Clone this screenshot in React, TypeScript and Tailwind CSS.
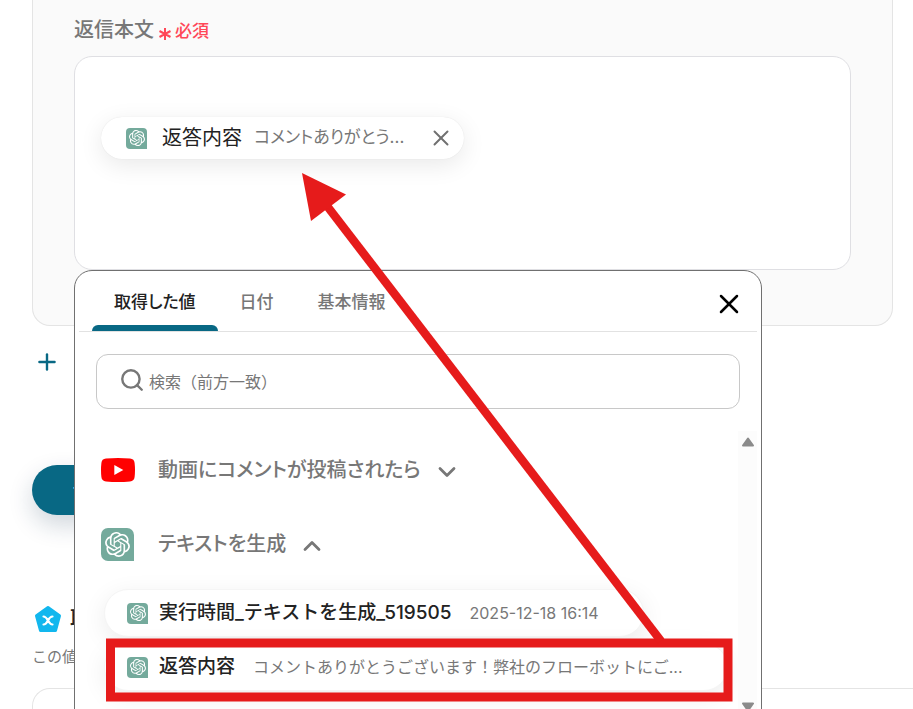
import React, { useState } from 'react';
import { ChevronDown, ChevronUp, Plus, Search, X } from 'lucide-react';
import { SiOpenai } from 'react-icons/si';

const tabs = ['取得した値', '日付', '基本情報'];

const outputs = [
  { name: '実行時間_テキストを生成_519505', value: '2025-12-18 16:14' },
  { name: '返答内容', value: 'コメントありがとうございます！弊社のフローボットにご...' },
];

const YouTubeIcon = () => (
  <svg viewBox="0 0 34 24" className="w-[34px] h-6 shrink-0">
    <path
      d="M5 .6Q17-.6 29 .6Q33.300 1 33.600 5Q34.400 12 33.600 19Q33.300 23 29 23.400Q17 24.600 5 23.400Q.700 23 .400 19Q-.400 12 .400 5Q.700 1 5 .6Z"
      fill="#ff0000"
    />
    <path d="M13.300 7L22.300 12L13.300 17Z" fill="#fff" />
  </svg>
);

const SmallAiIcon = () => (
  <span className="w-[21px] h-[21px] shrink-0 rounded-[4px] rounded-br-none bg-[#74aa9c] text-white flex items-center justify-center">
    <SiOpenai className="w-4 h-4" />
  </span>
);

const PentagonIcon = () => (
  <svg viewBox="0 0 28 28" className="w-7 h-7 shrink-0">
    <path
      d="M14 2.500L25.500 10.800L21.500 25.500H6.500L2.500 10.800Z"
      fill="#12b7ee"
      stroke="#12b7ee"
      strokeWidth="3"
      strokeLinejoin="round"
    />
    <path
      d="M9.500 11.500C13.800 11.500 14.200 19.500 18.500 19.500M18.500 11.500C16.500 11.500 15.300 13 14 15.500C12.700 18 11.500 19.500 9.500 19.500"
      fill="none"
      stroke="#fff"
      strokeWidth="2.200"
      strokeLinecap="round"
    />
  </svg>
);

// Red arrow and frame that point out the value to pick
const Annotation = () => (
  <svg
    viewBox="0 0 913 709"
    className="absolute top-0 left-0 z-20 w-[913px] h-[709px] pointer-events-none"
  >
    <rect x="110.500" y="643" width="617.500" height="54" fill="none" stroke="#e61b1b" strokeWidth="9" />
    <path d="M324 202L661 641" stroke="#e61b1b" strokeWidth="8.500" />
    <path d="M302 173L346 194.500L311 221Z" fill="#e61b1b" />
  </svg>
);

const ValuePicker = () => {
  const [active, setActive] = useState(tabs[0]);
  const [query, setQuery] = useState('');

  return (
    <div
      role="dialog"
      aria-label="値の選択"
      className="absolute top-full -left-px z-10 mt-px w-[688px] rounded-t-[18px] border border-[#707070] bg-white"
    >
      <div className="mx-1 flex items-stretch justify-between border-b border-[#e2e2e2] pl-[13px] pr-4">
        <div role="tablist" className="flex">
          {tabs.map((tab) => (
            <button
              key={tab}
              role="tab"
              aria-selected={tab === active}
              onClick={() => setActive(tab)}
              className={
                tab === active
                  ? "relative h-[60px] px-[22px] pt-1 text-[17px] font-medium text-[#222] flex items-center [font-feature-settings:'palt']"
                  : "relative h-[60px] px-[22px] pt-1 text-[17px] font-medium text-[#777] flex items-center [font-feature-settings:'palt']"
              }
            >
              {tab}
              {tab === active && (
                <span className="absolute inset-x-0 bottom-0 h-[6px] rounded-t-[6px] bg-[#086884]" />
              )}
            </button>
          ))}
        </div>
        <button aria-label="閉じる" className="pt-[6px] text-black">
          <X className="w-8 h-8 -mr-1" strokeWidth={1.9} />
        </button>
      </div>

      <label className="mx-[21px] mt-[22px] h-[55px] flex items-center gap-1 rounded-xl border border-[#c8c8c8] px-[22px] text-[#777]">
        <Search className="mb-1 w-[26px] h-[26px] shrink-0" strokeWidth={2.2} />
        <input
          type="text"
          aria-label="検索"
          placeholder="検索（前方一致）"
          value={query}
          onChange={(e) => setQuery(e.target.value)}
          className="min-w-0 flex-1 bg-transparent text-base placeholder:text-[#777] focus:outline-none"
        />
      </label>

      <div className="mx-1 mt-[22px] flex">
        <div className="min-w-0 flex-1 overflow-hidden pl-[22px] pt-[2px] pb-8">
          <button className="flex h-[74px] items-center text-[20px] font-medium text-[#777] [font-feature-settings:'palt']">
            <YouTubeIcon />
            <span className="ml-[23px]">動画にコメントが投稿されたら</span>
            <ChevronDown className="ml-3 mt-1 w-7 h-7" strokeWidth={2.4} />
          </button>
          <button className="flex h-[74px] items-center text-[20px] font-medium text-[#777] [font-feature-settings:'palt']">
            <span className="w-[33px] h-[33px] shrink-0 rounded-[7px] rounded-br-none bg-[#74aa9c] text-white flex items-center justify-center">
              <SiOpenai className="w-[25px] h-[25px]" />
            </span>
            <span className="ml-6">テキストを生成</span>
            <ChevronUp className="ml-3 mt-1 w-7 h-7" strokeWidth={2.4} />
          </button>

          <div className="mt-2 ml-[3px] flex flex-col items-start gap-[6px]">
            {outputs.map((item) => (
              <button
                key={item.name}
                className="h-12 max-w-full flex items-center rounded-full bg-white border border-[#f5f5f5] pl-[22px] pr-11 shadow-[0_6px_24px_rgba(0,0,0,0.08)]"
              >
                <SmallAiIcon />
                <span className="ml-[11px] text-[19px] font-medium text-[#222] whitespace-nowrap">{item.name}</span>
                <span className="ml-[18px] text-base text-[#777] whitespace-nowrap">{item.value}</span>
              </button>
            ))}
          </div>
        </div>
        <div className="w-[19px] shrink-0 bg-[#fcfcfc] flex flex-col items-center justify-between pt-[6px]">
          <svg viewBox="0 0 14 10" className="w-[14px] h-[10px]">
            <path d="M7 1.500L12 8.500H2Z" fill="#8b8b8b" stroke="#8b8b8b" strokeWidth="2" strokeLinejoin="round" />
          </svg>
          <svg viewBox="0 0 14 10" className="w-[14px] h-[10px] mb-[11px]">
            <path d="M7 8.500L12 1.500H2Z" fill="#8b8b8b" stroke="#8b8b8b" strokeWidth="2" strokeLinejoin="round" />
          </svg>
        </div>
      </div>
    </div>
  );
};

const App: React.FC = () => {
  return (
    <div className="relative h-screen overflow-hidden bg-white font-['Inter','Noto_Sans_CJK_JP',sans-serif] text-[#222]">
      <main className="pl-8">
        <section className="mr-5 rounded-b-[18px] border border-t-0 border-[#e4e4e4] bg-[#fafafa] px-[41px] pt-4 pb-[55px]">
          <div className="flex h-7 items-center">
            <span id="body-label" className="text-[20px] font-medium text-[#777] [font-feature-settings:'palt']">返信本文</span>
            <span className="ml-1 flex items-center gap-[3px] pt-1 text-[17px] font-medium text-[#ff4757]">
              <svg viewBox="0 0 14 14" className="w-[14px] h-[14px] mt-1">
                <path d="M7 1V13M1.500 4L12.500 10M12.500 4L1.500 10" stroke="currentColor" strokeWidth="2" />
              </svg>
              必須
            </span>
          </div>

          <div
            role="textbox"
            aria-labelledby="body-label"
            className="relative mt-3 h-[214px] rounded-[18px] border border-[#dfdfe3] bg-white pl-[26px] pt-[60px]"
          >
            <div className="inline-flex h-[42px] items-center rounded-full bg-white pl-[25px] pr-[10px] shadow-[0_6px_24px_rgba(0,0,0,0.09),0_0_1px_rgba(0,0,0,0.12)] [font-feature-settings:'palt']">
              <SmallAiIcon />
              <span className="ml-[15px] text-[20px]">返答内容</span>
              <span className="ml-3 w-[155px] text-[17px] text-[#777] whitespace-nowrap">コメントありがとう...</span>
              <button aria-label="削除" className="ml-[19px] text-[#707070]">
                <X className="w-[26px] h-[26px]" strokeWidth={1.8} />
              </button>
            </div>
            <ValuePicker />
          </div>
        </section>

        <button aria-label="追加" className="mt-[23px] block text-[#086884]">
          <Plus className="ml-[2px] w-[26px] h-[26px]" strokeWidth={2.2} />
        </button>

        <button className="mt-[90px] flex h-[50px] items-center rounded-full bg-[#086884] px-10 text-lg font-medium text-white shadow-[0_10px_24px_rgba(20,50,80,0.2)]">
          テスト
        </button>

        <h2 className="mt-[90px] flex h-7 items-center gap-2 pl-[2px] text-[20px] font-medium">
          <PentagonIcon />
          取得
        </h2>
        <p className="mt-3 text-[15px] leading-6 text-[#777]">この値</p>
        <div className="mt-[19px] h-16 rounded-tl-[18px] border-t border-l border-[#e4e4e4]" />
      </main>
      <Annotation />
    </div>
  );
};

export default App;
